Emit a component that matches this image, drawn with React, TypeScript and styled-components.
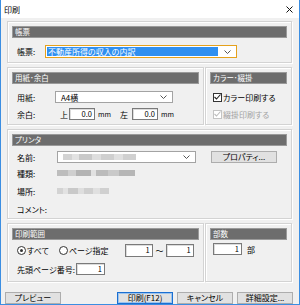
import React from 'react';
import styled, { createGlobalStyle } from 'styled-components';

const GlobalStyle = createGlobalStyle`
  html, body { margin: 0; padding: 0; background: #fff; }
  body {
    font-family: "Noto Sans CJK JP", "Noto Sans", sans-serif;
    font-size: 8px;
    font-feature-settings: "palt";
    color: #000;
  }
`;

const Window = styled.div`
  width: 300px;
  height: 305px;
  box-sizing: border-box;
  border: 1px solid #3b8ee2;
  border-top: none;
  background: #f0f0f0;
  display: flex;
  flex-direction: column;
`;

const TitleBar = styled.div`
  flex: none;
  height: 18px;
  background: #fff;
  display: flex;
  align-items: center;
  justify-content: space-between;
  padding: 0 6px 0 3px;
  font-size: 8px;
`;

const Body = styled.div`
  flex: 1;
  display: flex;
  flex-direction: column;
  gap: 4px;
  padding: 3px 7px 0 6px;
`;

const Split = styled.div`
  display: flex;
  gap: 1px;
`;

const Group = styled.section<{ $w?: number }>`
  box-sizing: border-box;
  ${({ $w }) => ($w ? `width: ${$w}px; flex: none;` : 'flex: 1 1 auto;')}
  border: 1px solid #d3d3d3;
  box-shadow: 1px 1px 0 #fff, inset 1px 1px 0 #fff;
  padding: 4px 4px 0;
`;

const GroupHeader = styled.div`
  box-sizing: border-box;
  height: 12px;
  background: #6d6d6d;
  border: 1px solid #9a9a9a;
  color: #fff;
  font-size: 7.5px;
  line-height: 10px;
  padding-left: 2px;
`;

const GroupBody = styled.div<{ $pl: number; $pb: number }>`
  padding: 0 0 ${({ $pb }) => $pb}px ${({ $pl }) => $pl}px;
  display: flex;
  flex-direction: column;
`;

const Row = styled.div<{ $h: number; $mt: number }>`
  display: flex;
  align-items: center;
  height: ${({ $h }) => $h}px;
  margin-top: ${({ $mt }) => $mt}px;
  white-space: nowrap;
`;

const Label = styled.span<{ $w?: number; $ml?: number; $dim?: boolean }>`
  flex: none;
  ${({ $w }) => ($w ? `width: ${$w}px;` : '')}
  margin-left: ${({ $ml }) => $ml ?? 0}px;
  color: ${({ $dim }) => ($dim ? '#a3a3a3' : '#000')};
`;

const Combo = styled.div<{ $w: number; $focus?: boolean }>`
  box-sizing: border-box;
  flex: none;
  width: ${({ $w }) => $w}px;
  height: 100%;
  display: flex;
  align-items: center;
  background: #fff;
  border: 1px solid ${({ $focus }) => ($focus ? '#e5a11c' : '#a3a3a3')};
  padding: 0 5px 0 ${({ $focus }) => ($focus ? 1 : 4)}px;
`;

const ComboValue = styled.div<{ $selected?: boolean }>`
  flex: 1;
  height: ${({ $selected }) => ($selected ? '9px' : 'auto')};
  line-height: 9px;
  padding-left: 1px;
  background: ${({ $selected }) => ($selected ? '#2f8ff0' : 'transparent')};
  color: ${({ $selected }) => ($selected ? '#fff' : '#000')};
  margin-right: 6px;
`;

const TextBox = styled.div<{ $w: number; $ml?: number }>`
  box-sizing: border-box;
  flex: none;
  width: ${({ $w }) => $w}px;
  height: 100%;
  margin-left: ${({ $ml }) => $ml ?? 0}px;
  background: #fff;
  border: 1px solid #7a7a7a;
  box-shadow: inset 1px 1px 0 #dcdcdc;
  text-align: right;
  padding-right: 2px;
  font-size: 7.5px;
  line-height: 10px;
`;

const Unit = styled.span<{ $ml: number }>`
  margin-left: ${({ $ml }) => $ml}px;
  font-size: 7px;
`;

const Box = styled.span<{ $dim?: boolean }>`
  box-sizing: border-box;
  flex: none;
  width: 9px;
  height: 9px;
  margin-right: 1px;
  border: 1px solid ${({ $dim }) => ($dim ? '#c4c4c4' : '#333')};
  background: #fff;
  display: flex;
  align-items: center;
  justify-content: center;
`;

const Dot = styled.span<{ $on?: boolean; $ml?: number }>`
  box-sizing: border-box;
  flex: none;
  width: 9px;
  height: 9px;
  margin: 0 1px 0 ${({ $ml }) => $ml ?? 0}px;
  border: 1px solid #333;
  border-radius: 50%;
  background: #fff;
  display: flex;
  align-items: center;
  justify-content: center;
  &::after {
    content: '';
    width: 3px;
    height: 3px;
    border-radius: 50%;
    background: ${({ $on }) => ($on ? '#333' : 'transparent')};
  }
`;

const Mosaic = styled.div<{ $w: number; $light?: boolean }>`
  width: ${({ $w }) => $w}px;
  height: 6px;
  filter: blur(0.6px);
  background: ${({ $light }) =>
    $light
      ? 'linear-gradient(90deg, #d3d3d3 0 12%, #e2e2e2 12% 22%, #c9c9c9 22% 40%, #dedede 40% 52%, #cfcfcf 52% 70%, #e0e0e0 70% 82%, #d0d0d0 82% 100%)'
      : 'linear-gradient(90deg, #bdbdbd 0 14%, #cfcfcf 14% 24%, #b3b3b3 24% 44%, #e1e1e1 44% 50%, #bbbbbb 50% 66%, #c9c9c9 66% 80%, #b6b6b6 80% 100%)'};
`;

const PushButton = styled.button<{ $w: number; $ml?: number; $default?: boolean }>`
  box-sizing: border-box;
  flex: none;
  width: ${({ $w }) => $w}px;
  height: 12px;
  margin-left: ${({ $ml }) => $ml ?? 0}px;
  padding: 0;
  font: inherit;
  font-size: 8px;
  line-height: 10px;
  color: #000;
  background: #e1e1e1;
  border: 1px solid ${({ $default }) => ($default ? '#1b6fd1' : '#adadad')};
  box-shadow: ${({ $default }) => ($default ? 'inset 0 0 0 1px #9cc4ee' : 'none')};
`;

const ButtonBar = styled.div`
  display: flex;
  gap: 4px;
  margin: 6px -1px 0 -2px;
  & > :nth-child(2) { margin-left: auto; }
`;

const Chevron = () => (
  <svg width="7" height="4" viewBox="0 0 7 4" style={{ flex: 'none' }}>
    <polyline points="0.5,0.5 3.5,3.5 6.5,0.5" fill="none" stroke="#555" strokeWidth="1" />
  </svg>
);

const Check = ({ dim }: { dim?: boolean }) => (
  <svg width="7" height="6" viewBox="0 0 7 6">
    <polyline points="0.5,3 2.5,5 6.5,0.5" fill="none" stroke={dim ? '#bdbdbd' : '#222'} strokeWidth="1.1" />
  </svg>
);

const Close = () => (
  <svg width="7" height="7" viewBox="0 0 7 7">
    <path d="M0.5 0.5 L6.5 6.5 M6.5 0.5 L0.5 6.5" stroke="#111" strokeWidth="1" />
  </svg>
);

const App: React.FC = () => (
  <>
    <GlobalStyle />
    <Window>
      <TitleBar>
        <span>印刷</span>
        <Close />
      </TitleBar>
      <Body>
        <Group>
          <GroupHeader>帳票</GroupHeader>
          <GroupBody $pl={5} $pb={4}>
            <Row $h={13} $mt={7}>
              <Label $w={28}>帳票:</Label>
              <Combo $w={192} $focus>
                <ComboValue $selected>不動産所得の収入の内訳</ComboValue>
                <Chevron />
              </Combo>
            </Row>
          </GroupBody>
        </Group>

        <Split>
          <Group $w={197}>
            <GroupHeader>用紙･余白</GroupHeader>
            <GroupBody $pl={5} $pb={4}>
              <Row $h={12} $mt={7}>
                <Label $w={38}>用紙:</Label>
                <Combo $w={118}>
                  <ComboValue>A4横</ComboValue>
                  <Chevron />
                </Combo>
              </Row>
              <Row $h={12} $mt={5}>
                <Label $w={43}>余白:</Label>
                <Label>上</Label>
                <TextBox $w={26} $ml={1}>0.0</TextBox>
                <Unit $ml={3}>mm</Unit>
                <Label $ml={9}>左</Label>
                <TextBox $w={26} $ml={4}>0.0</TextBox>
                <Unit $ml={3}>mm</Unit>
              </Row>
            </GroupBody>
          </Group>
          <Group>
            <GroupHeader>カラー･綴掛</GroupHeader>
            <GroupBody $pl={3} $pb={4}>
              <Row $h={12} $mt={7}>
                <Box><Check /></Box>
                <Label>カラー印刷する</Label>
              </Row>
              <Row $h={12} $mt={5}>
                <Box $dim><Check dim /></Box>
                <Label $dim>綴掛印刷する</Label>
              </Row>
            </GroupBody>
          </Group>
        </Split>

        <Group>
          <GroupHeader>プリンタ</GroupHeader>
          <GroupBody $pl={5} $pb={0}>
            <Row $h={12} $mt={5}>
              <Label $w={40}>名前:</Label>
              <Combo $w={139}>
                <ComboValue>
                  <Mosaic $w={73} $light />
                </ComboValue>
                <Chevron />
              </Combo>
              <PushButton $w={66} $ml={15}>プロパティ...</PushButton>
            </Row>
            <Row $h={18} $mt={1}>
              <Label $w={40}>種類:</Label>
              <Mosaic $w={78} />
            </Row>
            <Row $h={18} $mt={0}>
              <Label $w={40}>場所:</Label>
              <Mosaic $w={52} $light />
            </Row>
            <Row $h={18} $mt={0}>
              <Label $w={40}>コメント:</Label>
            </Row>
          </GroupBody>
        </Group>

        <Split>
          <Group $w={197}>
            <GroupHeader>印刷範囲</GroupHeader>
            <GroupBody $pl={5} $pb={6}>
              <Row $h={13} $mt={4}>
                <Dot $on />
                <Label>すべて</Label>
                <Dot $ml={10} />
                <Label>ページ指定</Label>
                <TextBox $w={28} $ml={16}>1</TextBox>
                <Label $ml={3}>～</Label>
                <TextBox $w={28} $ml={2}>1</TextBox>
              </Row>
              <Row $h={12} $mt={6}>
                <Label $w={59}>先頭ページ番号:</Label>
                <TextBox $w={29}>1</TextBox>
              </Row>
            </GroupBody>
          </Group>
          <Group>
            <GroupHeader>部数</GroupHeader>
            <GroupBody $pl={3} $pb={0}>
              <Row $h={12} $mt={3}>
                <TextBox $w={29}>1</TextBox>
                <Label $ml={5}>部</Label>
              </Row>
            </GroupBody>
          </Group>
        </Split>

        <ButtonBar>
          <PushButton $w={56}>プレビュー</PushButton>
          <PushButton $w={56} $default>印刷(F12)</PushButton>
          <PushButton $w={56}>キャンセル</PushButton>
          <PushButton $w={56}>詳細設定...</PushButton>
        </ButtonBar>
      </Body>
    </Window>
  </>
);

export default App;
